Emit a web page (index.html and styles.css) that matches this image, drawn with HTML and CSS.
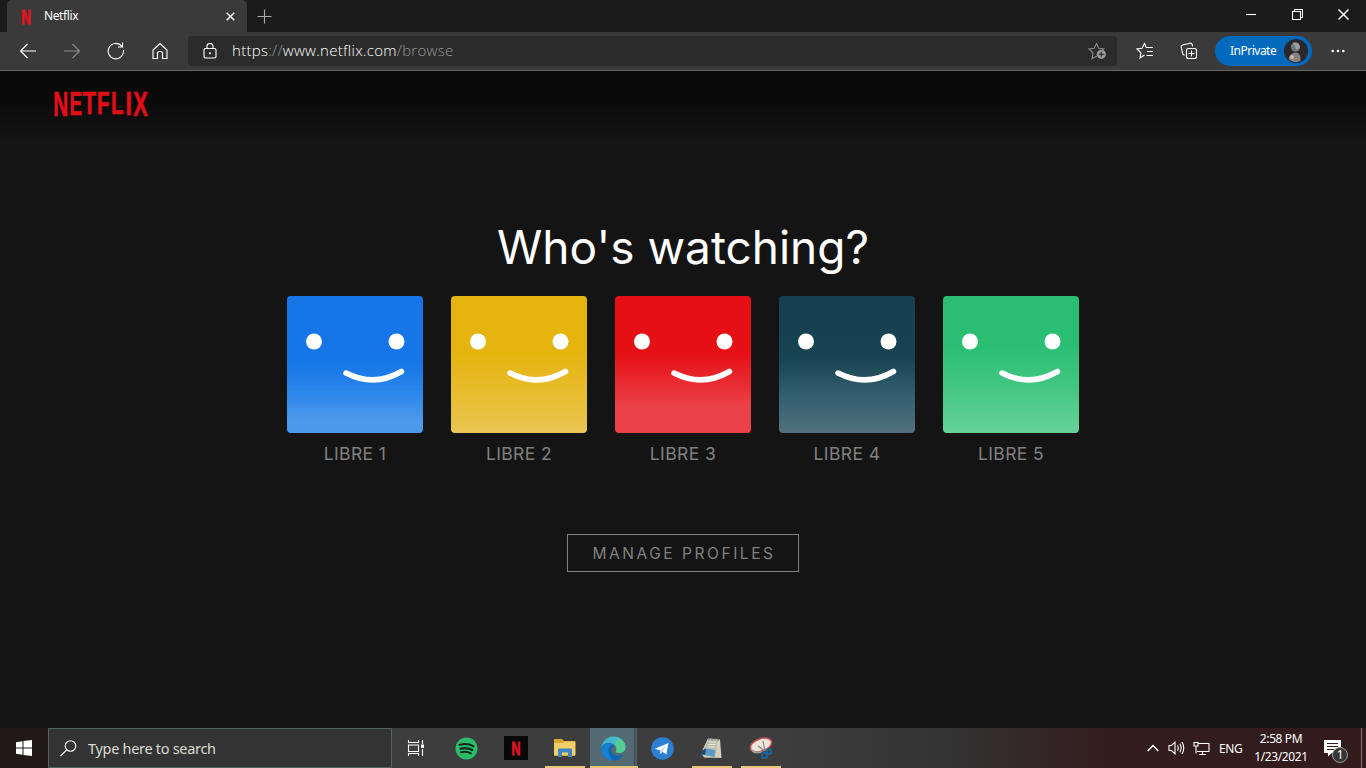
FILE: index.html
```html
<!DOCTYPE html>
<html lang="en">
<head>
    <meta charset="UTF-8">
    <meta name="viewport" content="width=device-width, initial-scale=1.0">
    <title>Netflix</title>
    <link rel="stylesheet" href="styles.css">
</head>
<body>
    <!-- shared face for every profile -->
    <svg width="0" height="0" class="defs">
        <symbol id="face" viewBox="0 0 136 137">
            <circle cx="27" cy="45.5" r="8" fill="#fff"/>
            <circle cx="109.5" cy="45.5" r="8" fill="#fff"/>
            <path d="M59 77 Q87 91.500 114.500 75.500" fill="none" stroke="#fff" stroke-width="5.500" stroke-linecap="round"/>
        </symbol>
    </svg>

    <div class="tabstrip">
        <div class="tab">
            <svg class="favicon" width="12" height="30" viewBox="0 0 12 30"><text x="1" y="22.500" textLength="10" lengthAdjust="spacingAndGlyphs" class="n-mark">N</text></svg>
            <span class="tab-title">Netflix</span>
            <svg width="9" height="9" viewBox="0 0 9 9"><path d="M.7 .7 8.300 8.300M8.300 .7 .7 8.300" class="line bold"/></svg>
        </div>
        <svg class="new-tab" width="15" height="15" viewBox="0 0 15 15"><path d="M7.500 .5V14.500M.5 7.500H14.500" class="line soft"/></svg>
        <div class="window-buttons">
            <svg width="11" height="10" viewBox="0 0 11 10"><path d="M0 5.500H10" class="line"/></svg>
            <svg width="11" height="11" viewBox="0 0 11 11"><path d="M.5 2.500H8.500V10.500H.5ZM2.500 2.500V.5H10.500V8.500H8.500" class="line"/></svg>
            <svg width="11" height="11" viewBox="0 0 11 11"><path d="M.5 .5 10.500 10.500M10.500 .5 .5 10.500" class="line bold"/></svg>
        </div>
    </div>

    <div class="toolbar">
        <div class="nav">
            <svg width="18" height="18" viewBox="0 0 18 18"><path d="M17 9H1.500M8.500 2 1.500 9 8.500 16" class="line"/></svg>
            <svg width="18" height="18" viewBox="0 0 18 18"><path d="M1 9H16.500M9.500 2 16.500 9 9.500 16" class="line dim"/></svg>
            <svg width="18" height="18" viewBox="0 0 18 18"><path d="M16.500 8A7.700 7.700 0 1 1 14.800 4.200M15.500 .5V5H11" class="line"/></svg>
            <svg width="18" height="18" viewBox="0 0 18 18"><path d="M2 16.500V8L9 1.500 16 8V16.500H11.500V11Q11.500 9.500 9 9.500T6.500 11V16.500Z" class="line"/></svg>
        </div>
        <div class="address">
            <svg width="14" height="16" viewBox="0 0 14 16"><rect x="1" y="5.500" width="12" height="9.500" rx="1.500" class="line"/><path d="M4 5.500V3.500A3 3 0 0 1 10 3.500V5.500" class="line"/><circle cx="7" cy="10.300" r="1" fill="#fff"/></svg>
            <span class="url"><i>https</i>://<i>www.netflix.com</i>/browse</span>
            <svg class="add-fav" width="19" height="18" viewBox="0 0 19 18"><path d="M9 14 4 16.500 5 11 1 7 6.200 6.300 8.500 1.500 10.800 6.300 16 7 14 9" class="line dim"/><circle cx="13.300" cy="12.300" r="4.600" fill="#999"/><path d="M13.300 9.800V14.800M10.800 12.300H15.800" stroke="#333" stroke-width="1.200"/></svg>
        </div>
        <div class="tools">
            <svg width="18" height="18" viewBox="0 0 18 18"><path d="M8.500 13 4 16 5 11 1 7 6 6.300 8.500 1.500 10.300 5.500H17M11 9.500H17M10.500 13.500H17" class="line"/></svg>
            <svg width="18" height="18" viewBox="0 0 18 18"><rect x="6.500" y="6.500" width="10" height="10" rx="2" class="line"/><path d="M11.500 8.500V14.500M8.500 11.500H14.500M4.500 13.500 2.800 12 1.200 5Q1 3.500 2.500 3L10 1.200Q11.700 1 12.200 2.500L12.600 4.300" class="line"/></svg>
        </div>
        <div class="private">
            <span>InPrivate</span>
            <svg width="24" height="24" viewBox="0 0 24 24"><circle cx="12" cy="12" r="12" fill="#29272a"/><circle cx="11.500" cy="8" r="4.700" fill="#77787b"/><path d="M9 3.800Q15 3 15.800 8L13 11Z" fill="#a1a0a1"/><path d="M4.500 20Q6 13.500 12 13.500 17 14 16.500 22 9 25 4.500 20Z" fill="#88817f"/><circle cx="8" cy="18" r="2" fill="#cbbcb2"/></svg>
        </div>
        <svg class="more" width="14" height="4" viewBox="0 0 14 4"><g fill="#fff"><circle cx="1.700" cy="2" r="1.300"/><circle cx="7" cy="2" r="1.300"/><circle cx="12.300" cy="2" r="1.300"/></g></svg>
    </div>

    <main class="page">
        <!-- letters get shorter towards the middle to make the arch -->
        <svg class="logo" width="104" height="48" viewBox="0 0 104 48">
            <text y="33" font-size="35" textLength="15" lengthAdjust="spacingAndGlyphs" x="0.300">N</text>
            <text y="32" font-size="33" textLength="12.500" lengthAdjust="spacingAndGlyphs" x="16.500">E</text>
            <text y="31" font-size="32" textLength="13" lengthAdjust="spacingAndGlyphs" x="30">T</text>
            <text y="30.500" font-size="31" textLength="12.500" lengthAdjust="spacingAndGlyphs" x="44">F</text>
            <text y="31" font-size="32" textLength="12.500" lengthAdjust="spacingAndGlyphs" x="58">L</text>
            <text y="32" font-size="33" textLength="6.500" lengthAdjust="spacingAndGlyphs" x="72.500">I</text>
            <text y="33" font-size="35" textLength="14.500" lengthAdjust="spacingAndGlyphs" x="80.300">X</text>
        </svg>
        <h1>Who's watching?</h1>
        <div class="profiles">
            <div class="profile">
                <svg class="avatar blue"><use href="#face"/></svg>
                <span>LIBRE 1</span>
            </div>
            <div class="profile">
                <svg class="avatar yellow"><use href="#face"/></svg>
                <span>LIBRE 2</span>
            </div>
            <div class="profile">
                <svg class="avatar red"><use href="#face"/></svg>
                <span>LIBRE 3</span>
            </div>
            <div class="profile">
                <svg class="avatar navy"><use href="#face"/></svg>
                <span>LIBRE 4</span>
            </div>
            <div class="profile">
                <svg class="avatar green"><use href="#face"/></svg>
                <span>LIBRE 5</span>
            </div>
        </div>
        <div class="manage">MANAGE PROFILES</div>
    </main>

    <div class="taskbar">
        <div class="start">
            <svg width="16" height="16" viewBox="0 0 16 16"><path d="M0 2.200 6.500 1.300V7.500H0ZM7.500 1.100 16 0V7.500H7.500ZM0 8.500H6.500V14.700L0 13.800ZM7.500 8.500H16V16L7.500 14.900Z" fill="#fff"/></svg>
        </div>
        <div class="search">
            <svg width="17" height="17" viewBox="0 0 17 17"><circle cx="10.500" cy="6" r="5.300" class="line"/><path d="M6.700 9.800 .5 16" class="line"/></svg>
            <span>Type here to search</span>
        </div>
        <div class="apps">
            <div class="app view">
                <svg width="18" height="16" viewBox="0 0 18 16"><path d="M1.500 0V2.500H11.500V0M1.500 5H11.500V11.500H1.500ZM1.500 16V13.500H11.500V16M15.500 0V4M15.500 9V16" class="line"/><path d="M14 4.500H17V8H14Z" fill="#fff"/></svg>
            </div>
            <div class="app">
                <svg width="23" height="23" viewBox="0 0 23 23"><circle cx="11.500" cy="11.500" r="11" fill="#2abb6b"/><path d="M4.500 8Q12 5.500 18.500 9.300M5.300 11.800Q11.500 10 17.300 13M6 15.200Q11 13.900 15.800 16.300" fill="none" stroke="#17251d" stroke-width="2" stroke-linecap="round"/></svg>
            </div>
            <div class="app">
                <svg width="24" height="24" viewBox="0 0 24 24"><path d="M0 0H24V24H0Z" fill="#080808"/><text x="7.500" y="19" textLength="9" lengthAdjust="spacingAndGlyphs" class="n-mark small">N</text></svg>
            </div>
            <div class="app open">
                <svg width="22" height="20" viewBox="0 0 22 20"><path d="M0 1H8L10 3H21V18H0Z" fill="#d9a92d"/><path d="M0 5H9L11 3.500H21.500V17H0Z" fill="#f3cf67"/><path d="M4 19V11.500Q4 10.500 5 10.500H17Q18 10.500 18 11.500V19H14V14.500H8V19Z" fill="#3d86c9"/></svg>
            </div>
            <div class="app active">
                <svg width="25" height="25" viewBox="0 0 25 25"><path d="M.5 12C1 5 6 .5 13 .5 20 .5 24.500 6 24.500 11 24.500 15.500 21 17 18 17 15.500 17 14.200 15.800 15.300 14 17 10 12 7 8 7.500 4 8 1.500 10 .5 12Z" fill="#42b7c9"/><path d="M17 2Q24.500 5 24.500 11C24.500 15.500 21 17 18 17 15.500 17 14.200 15.800 15.300 14 16 12 15 10 13.500 9Z" fill="#55cc93"/><path d="M.5 13C.5 8 6 6 10 7.500 12 8 13.500 9.500 13.500 10 9 11 9 16 12 18 15 20.500 19 20 22.500 18 20 23 16 24.500 12.500 24.500 5 24.500 .5 19 .5 13Z" fill="#0d66b4"/><path d="M.5 13C1 8 7 6 12 8.500 7 9 6.500 15 8.500 19 9.500 22 11 23.500 12.500 24.500 5 24.500 .5 19 .5 13Z" fill="#1681d2"/></svg>
            </div>
            <div class="app">
                <svg width="23" height="23" viewBox="0 0 23 23"><circle cx="11.500" cy="11.500" r="11.300" fill="#2d80d2"/><path d="M4 11.800 17.500 6 15.300 17.500 11.500 14.800 9.600 17 9 13.500Z" fill="#fff"/><path d="M9 13.500 15 8.500 11.500 14.800 9.600 17Z" fill="#c3d8ea"/></svg>
            </div>
            <div class="app open">
                <svg width="23" height="23" viewBox="0 0 23 23"><path d="M8 1.500 20 2.500 21.500 21 4 20.500 1 16Z" fill="#d6d0bb"/><path d="M8 1.500 18 2.500 15 20 3 16Z" fill="#b7beb4"/><path d="M9 5H16M8 7.500H15.500M7.500 10H15" stroke="#ece6c8"/><path d="M4.500 11.500 15.500 13 14.500 20 1 17.500Z" fill="#5b9bc6"/><path d="M1 14 6 11.500 5 18 0 17Z" fill="#24485d"/><path d="M9 1V3M12 1V3.500M15 1V3.500M18 1.500V4" stroke="#777"/></svg>
            </div>
            <div class="app open">
                <svg width="24" height="23" viewBox="0 0 24 23"><ellipse cx="12" cy="8" rx="11" ry="6.200" fill="#ede5dc" stroke="#c65351" stroke-width="1.500" transform="rotate(-20 12 8)"/><path d="M1.500 11.500Q3 18 12 16L13 14Q6 16 1.500 11.500Z" fill="#99a0a0"/><path d="M9 9 16 14M14 4 16 14" stroke="#888" stroke-width="1.200"/><g fill="none" stroke="#17679f" stroke-width="2"><circle cx="15.500" cy="18.500" r="2.500"/><circle cx="20" cy="14.500" r="2.300"/></g></svg>
            </div>
        </div>
        <div class="tray">
            <svg class="chevron" width="12" height="8" viewBox="0 0 12 8"><path d="M.7 7 6 1.500 11.300 7" class="line bold"/></svg>
            <svg class="volume" width="17" height="14" viewBox="0 0 17 14"><path d="M1 4.500H3.500L7 1.200V12.800L3.500 9.500H1ZM9.500 4.500Q11 7 9.500 9.500M11.800 2.800Q14.500 7 11.800 11.200M14 1Q17.500 7 14 13" class="line"/></svg>
            <svg class="network" width="17" height="15" viewBox="0 0 17 15"><path d="M5 2.500H16V10.500H4M9.500 10.500V13.500M6 13.500H13M1 1.500H5V5H1ZM3 5V12.500" class="line"/></svg>
            <span class="lang">ENG</span>
            <div class="clock"><span>2:58 PM</span><span>1/23/2021</span></div>
            <div class="notes">
                <svg width="17" height="17" viewBox="0 0 17 17"><path d="M0 0H17V13H8L4 16.500V13H0Z" fill="#fff"/><path d="M3 3.500H14M3 6.500H14M3 9.500H10" stroke="#331d1e" stroke-width="1.200"/></svg>
                <span class="badge">1</span>
            </div>
        </div>
    </div>
</body>
</html>
```
FILE: styles.css
```css
* {
    box-sizing: border-box;
}

body {
    margin: 0;
    width: 1366px;
    height: 768px;
    overflow: hidden;
    display: flex;
    flex-direction: column;
    background: #141414;
    color: #fff;
    font-family: "Noto Sans", "Open Sans", sans-serif;
}

svg {
    display: block;
    flex-shrink: 0;
}

.defs {
    position: absolute;
}

/* icon strokes */
.line {
    fill: none;
    stroke: #fff;
    stroke-width: 1.1;
}

.line.bold {
    stroke-width: 1.5;
}

.line.soft {
    stroke: #aaa;
}

.line.dim {
    stroke: #8b8b8b;
}

.n-mark {
    font: bold 21px "Liberation Sans", sans-serif;
    fill: #e01620;
    stroke: #e01620;
    stroke-width: 0.8;
}

.n-mark.small {
    font-size: 19px;
}

/* browser */
.tabstrip {
    height: 32px;
    display: flex;
    align-items: center;
    background: #1b1b1b;
    padding-left: 7px;
}

.tab {
    width: 240px;
    height: 32px;
    display: flex;
    align-items: center;
    padding: 0 12px 0 13px;
    background: #3a3a3a;
    border-radius: 5px 5px 0 0;
}

.tab-title {
    flex: 1;
    margin-left: 12px;
    font-size: 12px;
    letter-spacing: -0.4px;
    line-height: 32px;
}

.new-tab {
    margin-left: 10px;
}

.window-buttons {
    margin-left: auto;
    margin-right: 17px;
    margin-bottom: 4px;
    display: flex;
    align-items: center;
    gap: 35px;
}

.toolbar {
    height: 39px;
    display: flex;
    align-items: center;
    background: #3a3a3a;
    border-bottom: 1px solid #666;
}

.nav {
    width: 188px;
    display: flex;
    gap: 26px;
    padding-left: 19px;
}

.address {
    width: 929px;
    height: 30px;
    display: flex;
    align-items: center;
    padding: 0 10px 0 15px;
    background: #2b2b2b;
    border-radius: 3px;
}

.url {
    margin-left: 15px;
    margin-bottom: 2px;
    font-family: "Open Sans", sans-serif;
    font-size: 15px;
    font-weight: 300;
    letter-spacing: 0.28px;
    color: #999;
}

.url i {
    font-style: normal;
    color: #fff;
}

.add-fav {
    margin-left: auto;
}

.tools {
    display: flex;
    gap: 26px;
    margin-left: 19px;
}

.private {
    width: 97px;
    height: 30px;
    display: flex;
    align-items: center;
    justify-content: space-between;
    margin-left: 17px;
    padding: 0 4px 0 15px;
    background: #0269bd;
    border-radius: 15px;
    font-size: 12px;
    letter-spacing: -0.5px;
}

.private span {
    margin-bottom: 1px;
}

.more {
    margin-left: 19px;
}

/* profile gate */
.page {
    height: 657px;
    display: flex;
    flex-direction: column;
    align-items: center;
    background: linear-gradient(#0a0a0a 30px, #141414 70px);
}

.logo {
    align-self: flex-start;
    margin: 12px 0 0 53px;
}

.logo text {
    font-family: "Liberation Sans", sans-serif;
    font-weight: bold;
    fill: #e30f17;
    stroke: #e30f17;
    stroke-width: 0.7;
}

h1 {
    height: 60px;
    margin: 86px 0 0;
    font: 400 46px/60px Inter, sans-serif;
    white-space: nowrap;
}

.profiles {
    display: flex;
    gap: 28px;
    margin-top: 19px;
}

.profile {
    width: 136px;
    display: flex;
    flex-direction: column;
    align-items: center;
    color: #808080;
    font: 17.5px/22px Inter, sans-serif;
    letter-spacing: 0.4px;
}

.profile span {
    margin-top: 10px;
}

.avatar {
    width: 136px;
    height: 137px;
    border-radius: 4px;
}

.blue {
    background: linear-gradient(#1676e7 48%, #2b85ea 70%, #4c99ec 90%);
}

.yellow {
    background: linear-gradient(#e5b40f 42%, #e8bd30 72%, #e9c653);
}

.red {
    background: linear-gradient(#e60f16 42%, #e9262d 60%, #ea4047 80%);
}

.navy {
    background: linear-gradient(#163f4f, #174352 45%, #356170 75%, #53707d);
}

.green {
    background: linear-gradient(#29be72 35%, #41c681 65%, #67d299);
}

.manage {
    width: 232px;
    height: 38px;
    margin-top: 69px;
    border: 1px solid #808080;
    color: #808080;
    font: 15.5px/37px Inter, sans-serif;
    letter-spacing: 2.55px;
    text-align: center;
    text-indent: 2px;
    white-space: nowrap;
}

/* taskbar */
.taskbar {
    height: 40px;
    display: flex;
    background: linear-gradient(90deg, #211a1a 0, #211a1a 48px, #3d3d3d 48px, #3d3d3d 780px, #333 950px, #341d1e 1110px, #331b1c);
}

.start {
    width: 48px;
    display: flex;
    align-items: center;
    justify-content: center;
}

.search {
    width: 344px;
    display: flex;
    align-items: center;
    padding-left: 11px;
    border: 1px solid #526461;
    background: #333334;
    color: #dcdcd2;
    font-size: 14.5px;
    letter-spacing: -0.3px;
}

.search span {
    margin-left: 11px;
}

.apps {
    display: flex;
}

.app {
    width: 49px;
    display: flex;
    align-items: center;
    justify-content: center;
}

.app.view {
    width: 50px;
    padding-right: 2px;
}

.app.open {
    background: linear-gradient(#e8c577, #e8c577) 5px 100% / 40px 2px no-repeat;
}

.app.active {
    background:
        linear-gradient(#e8c577, #e8c577) 1px 100% / 48px 2px no-repeat,
        linear-gradient(90deg, transparent 1px, #546b74 1px, #546b74 45px, #3d4a50 45px, #3d4a50 46px, #4c5f66 46px, #4c5f66 48px, transparent 48px);
}

.tray {
    margin-left: auto;
    width: 219px;
    display: flex;
    align-items: center;
    font-size: 12px;
    letter-spacing: -0.4px;
    white-space: nowrap;
}

.volume {
    margin-left: 9px;
}

.network {
    margin-left: 8px;
}

.lang {
    width: 24px;
    margin-left: 9px;
}

.clock {
    width: 56px;
    margin-left: 10px;
    display: flex;
    flex-direction: column;
    align-items: center;
    line-height: 18px;
}

.notes {
    position: relative;
    width: 38px;
    height: 40px;
    margin-left: 15px;
    padding-top: 12px;
    border-right: 1px solid #837675;
}

.badge {
    position: absolute;
    left: 8px;
    top: 19px;
    width: 16px;
    height: 16px;
    border: 1px solid #999;
    border-radius: 50%;
    background: #373636;
    line-height: 14px;
    text-align: center;
}
```
